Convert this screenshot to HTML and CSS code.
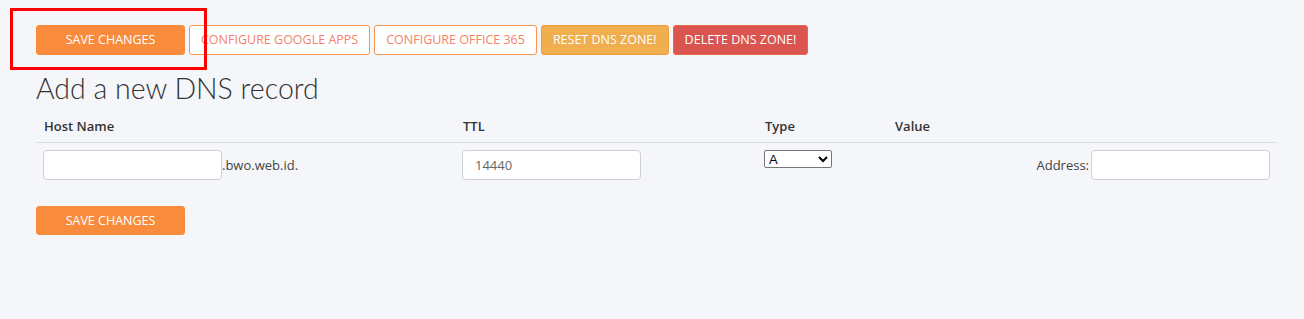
FILE: index.html
```html
<!DOCTYPE html>
<html lang="en">
<head>
<meta charset="utf-8">
<title>DNS</title>
<link rel="stylesheet" href="styles.css">
</head>
<body>
<div class="page">
  <div class="actions">
    <button class="btn btn-primary btn-wide">SAVE CHANGES</button>
    <button class="btn btn-outline">CONFIGURE GOOGLE APPS</button>
    <button class="btn btn-outline">CONFIGURE OFFICE 365</button>
    <button class="btn btn-warning">RESET DNS ZONE!</button>
    <button class="btn btn-danger">DELETE DNS ZONE!</button>
  </div>
  <h2 class="title">Add a new DNS record</h2>
  <table class="dns-table">
    <colgroup>
      <col class="c-host"><col class="c-ttl"><col class="c-type"><col class="c-value">
    </colgroup>
    <thead>
      <tr><th>Host Name</th><th>TTL</th><th>Type</th><th>Value</th></tr>
    </thead>
    <tbody>
      <tr>
        <td><input class="field" type="text"><span class="suffix">.bwo.web.id.</span></td>
        <td><input class="field field-ttl" type="text" value="14440"></td>
        <td class="type-cell"><select class="type-select"><option>A</option><option>AAAA</option><option>CNAME</option><option>MX</option><option>TXT</option></select></td>
        <td class="value-cell"><label class="addr-label">Address:</label><input class="field" type="text"></td>
      </tr>
    </tbody>
  </table>
  <div class="bottom">
    <button class="btn btn-primary btn-wide">SAVE CHANGES</button>
  </div>
  <div class="annotation"></div>
</div>
</body>
</html>
```

FILE: styles.css
```css
html, body {
  margin: 0;
  padding: 0;
  background: #f5f6fa;
}
body {
  font-family: "Open Sans", "Noto Sans", sans-serif;
  font-size: 13px;
  color: #333;
}
.page {
  position: relative;
  padding: 25px 27px 0 36px;
  height: 319px;
  box-sizing: border-box;
}
.actions {
  display: flex;
  gap: 4px;
}
.btn {
  font-family: "Open Sans", sans-serif;
  font-size: 12.5px;
  height: 30px;
  padding: 0 11px;
  border-radius: 3px;
  border: 1px solid transparent;
  box-sizing: border-box;
  line-height: 28px;
  cursor: pointer;
  white-space: nowrap;
}
.btn-wide {
  width: 149px;
}
.btn-primary {
  background: #f98b3c;
  border-color: #f98b3c;
  color: #fff;
}
.btn-outline {
  background: #fff;
  border-color: #f79550;
  color: #f3836a;
}
.btn-warning {
  background: #f0ae4e;
  border-color: #ec9c3c;
  color: #fff;
}
.btn-danger {
  background: #da5450;
  border-color: #e06a4a;
  color: #fff;
}
.title {
  font-family: "Lato", sans-serif;
  font-weight: 300;
  font-size: 28.5px;
  line-height: 32px;
  color: #333;
  margin: 17px 0 0 0;
}
.dns-table {
  width: 1241px;
  border-collapse: collapse;
  margin-top: 2px;
  table-layout: fixed;
}
.c-host { width: 419px; }
.c-ttl { width: 302px; }
.c-type { width: 130px; }
.c-value { width: 390px; }
.dns-table th {
  text-align: left;
  font-weight: 600;
  font-size: 13px;
  line-height: 20px;
  padding: 10px 8px 6px;
  border-bottom: 1px solid #dcdde1;
  color: #333;
}
.dns-table td {
  padding: 7px 7px 8px;
  vertical-align: top;
  white-space: nowrap;
}
.field {
  width: 179px;
  height: 30px;
  box-sizing: border-box;
  border: 1px solid #cfd0d4;
  border-radius: 4px;
  background: #fff;
  padding: 0 12px;
  font-family: "Open Sans", sans-serif;
  font-size: 13px;
  color: #555;
  vertical-align: middle;
}
.field-ttl {
  color: #666;
}
.suffix, .addr-label {
  vertical-align: middle;
  font-size: 13px;
  color: #444;
}
.type-cell {
  padding-top: 8px;
}
.type-select {
  width: 68px;
  height: 18px;
  font-family: "Liberation Sans", Arial, sans-serif;
  font-size: 13px;
  border: 1px solid #767676;
  border-radius: 2px;
  background: #fff;
  color: #000;
  padding: 0;
}
.value-cell {
  text-align: right;
}
.addr-label {
  margin-right: 2px;
}
.bottom {
  margin-top: 18px;
}
.bottom .btn {
  height: 29px;
  line-height: 27px;
}
.annotation {
  position: absolute;
  left: 10px;
  top: 8px;
  width: 197px;
  height: 62px;
  border: 3px solid #ff0000;
  box-sizing: border-box;
  pointer-events: none;
}
```
